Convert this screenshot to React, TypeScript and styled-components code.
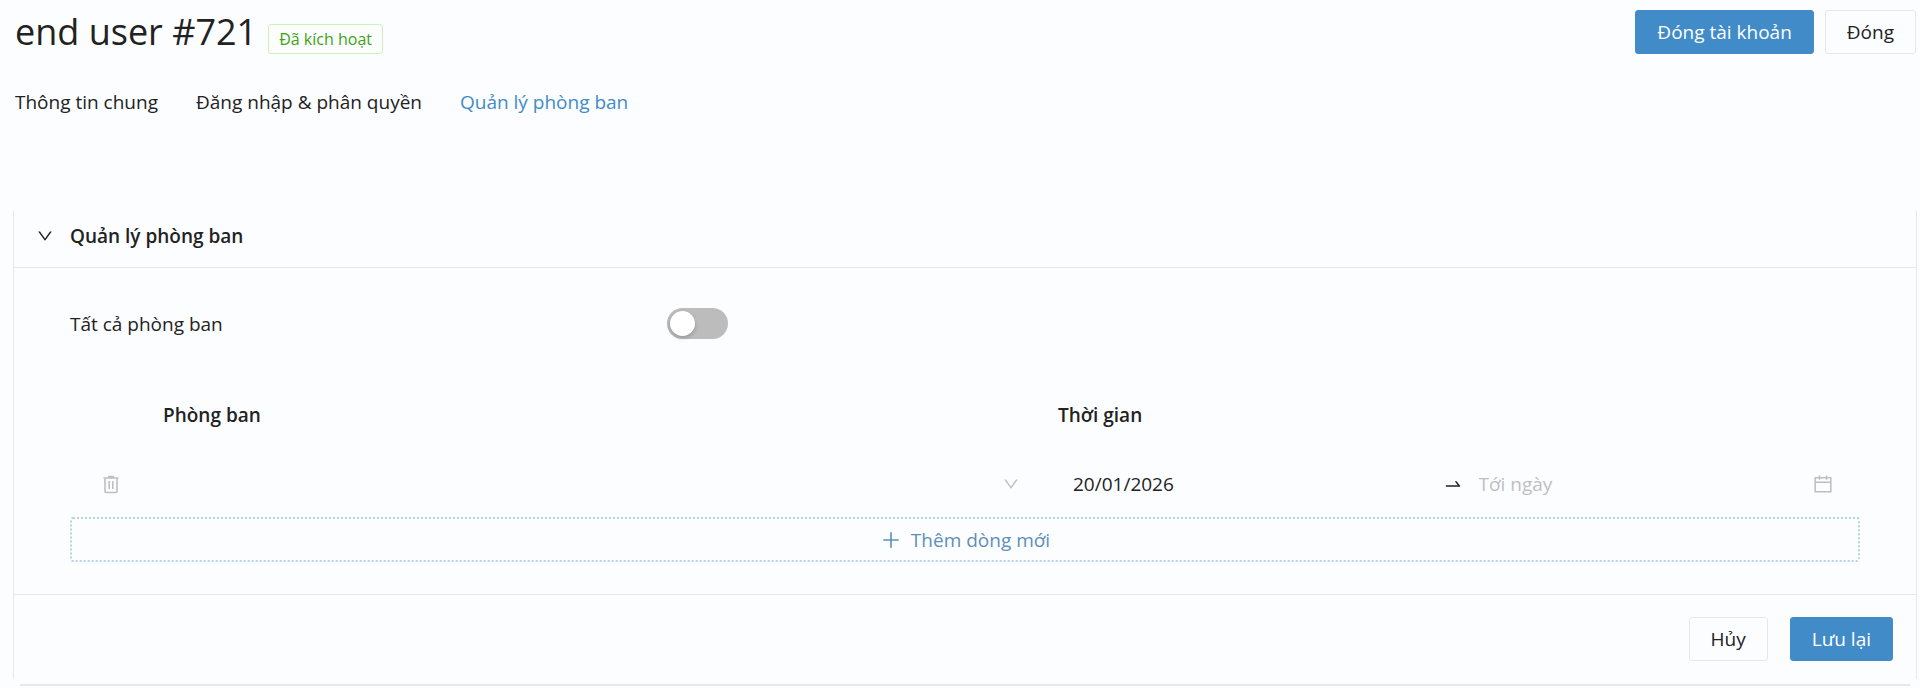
import React, { useState } from 'react';
import styled, { createGlobalStyle } from 'styled-components';
import {
  AiOutlineCalendar,
  AiOutlineDown,
  AiOutlinePlus,
  AiOutlineSwapRight,
} from 'react-icons/ai';

const color = {
  page: '#fcfdff',
  text: '#222222',
  muted: '#bfbfc1',
  line: '#e7e8ea',
  primary: '#418bc9',
  add: '#5d8fba',
  dash: '#b4d3e9',
  success: '#3ca312',
  successLine: '#cdf2b2',
};

const GlobalStyle = createGlobalStyle`
  *, *::before, *::after { box-sizing: border-box; }
  body {
    margin: 0;
    background: ${color.page};
    color: ${color.text};
    font-family: 'Open Sans', 'Noto Sans', sans-serif;
    font-size: 19px;
    line-height: 28px;
  }
  button, input, select { font: inherit; color: inherit; }
`;

const Page = styled.main`
  padding: 10px 3px 0 13px;
`;

const PageHeader = styled.header`
  display: flex;
  justify-content: space-between;
  align-items: flex-start;
  padding-right: 1px;
`;

const TitleGroup = styled.div`
  display: flex;
  align-items: flex-end;
  gap: 11px;
  padding-left: 2px;
`;

const Title = styled.h1`
  margin: 0;
  font-size: 36px;
  line-height: 44px;
  font-weight: 400;
`;

const Tag = styled.span`
  padding: 0 10px;
  border: 1px solid ${color.successLine};
  border-radius: 3px;
  color: ${color.success};
  font-size: 16px;
  line-height: 28px;
`;

const ButtonGroup = styled.div<{ $gap: number }>`
  display: flex;
  justify-content: flex-end;
  gap: ${(p) => p.$gap}px;
`;

const Button = styled.button<{ $primary?: boolean }>`
  height: 44px;
  padding: 0 21px;
  border: 1px solid ${(p) => (p.$primary ? color.primary : color.line)};
  border-radius: 3px;
  background: ${(p) => (p.$primary ? color.primary : color.page)};
  color: ${(p) => (p.$primary ? '#ffffff' : color.text)};
  cursor: pointer;
`;

const Tabs = styled.nav`
  display: flex;
  gap: 38px;
  padding: 34px 2px 95px;
`;

const Tab = styled.a<{ $active?: boolean }>`
  color: ${(p) => (p.$active ? color.primary : color.text)};
  text-decoration: none;
`;

const Panel = styled.section`
  border: solid ${color.line};
  border-width: 0 1px;
`;

const PanelHeader = styled.h2`
  margin: 0;
  border-bottom: 1px solid ${color.line};
  font-size: 19px;
  line-height: 28px;
  font-weight: 600;
`;

const PanelToggle = styled.button`
  display: flex;
  align-items: center;
  gap: 16px;
  width: 100%;
  padding: 11px 22px 17px;
  border: 0;
  background: none;
  text-align: left;
  cursor: pointer;

  svg { width: 18px; height: 18px; }
`;

const PanelBody = styled.div`
  padding: 40px 56px 32px;
`;

const SwitchRow = styled.div`
  display: grid;
  grid-template-columns: 1fr 2fr;
  align-items: center;
`;

const Switch = styled.input`
  appearance: none;
  width: 61px;
  height: 31px;
  margin: 0;
  padding: 3px;
  border-radius: 16px;
  background: #bcbcbc;
  cursor: pointer;

  &::before {
    content: '';
    display: block;
    width: 25px;
    height: 25px;
    border-radius: 50%;
    background: #ffffff;
    box-shadow: 0 2px 4px rgba(0, 0, 0, 0.2);
  }
  &:checked { background: ${color.primary}; }
  &:checked::before { margin-left: 30px; }
`;

const Table = styled.table`
  width: 100%;
  margin-top: 43px;
  border-collapse: collapse;
  table-layout: fixed;

  th, td { padding: 0 13px; text-align: left; }
  th { height: 66px; font-weight: 600; }
  td { height: 69px; padding-top: 3px; }
  thead td { height: 66px; }
`;

const IconColumn = styled.col`
  width: 80px;
`;

const DepartmentColumn = styled.col`
  width: 50%;
`;

const IconButton = styled.button`
  display: flex;
  margin: 0 auto;
  padding: 0;
  border: 0;
  background: none;
  color: ${color.muted};
  cursor: pointer;
`;

const SelectBox = styled.div`
  position: relative;
  color: ${color.muted};

  svg {
    position: absolute;
    top: 9px;
    right: 12px;
    width: 18px;
    height: 18px;
    pointer-events: none;
  }
`;

const Select = styled.select`
  appearance: none;
  display: block;
  width: 100%;
  height: 36px;
  padding: 0 40px 0 16px;
  border: 0;
  background: transparent;
  color: ${color.text};
`;

const DateRange = styled.div`
  position: relative;
  display: flex;
  align-items: center;
  gap: 16px;
  padding: 0 15px;
`;

const DateInput = styled.input`
  flex: 1;
  min-width: 0;
  height: 36px;
  padding: 0;
  border: 0;
  background: transparent;

  &::placeholder { color: ${color.muted}; opacity: 1; }
`;

const ArrowIcon = styled(AiOutlineSwapRight)`
  width: 20px;
  height: 20px;
`;

const CalendarIcon = styled(AiOutlineCalendar)`
  position: absolute;
  right: 13px;
  width: 22px;
  height: 22px;
  color: ${color.muted};
`;

const AddButton = styled.button`
  display: flex;
  justify-content: center;
  align-items: center;
  gap: 9px;
  width: 100%;
  height: 45px;
  border: 2px dotted ${color.dash};
  border-radius: 3px;
  background: none;
  color: ${color.add};
  cursor: pointer;

  svg { width: 22px; height: 22px; }
`;

const PanelFooter = styled.footer`
  padding: 22px 23px 18px;
  border-top: 1px solid ${color.line};
`;

const NextPanelEdge = styled.hr`
  height: 2px;
  margin: 5px 7px 0;
  border: 0;
  background: ${color.line};
`;

const TrashIcon = () => (
  <svg width="18" height="20" viewBox="0 0 18 20" fill="none" stroke="currentColor" aria-hidden="true">
    <path d="M2.5 4h15M7 2.5h6" strokeWidth="1.6" />
    <path d="M4 4v13.5q0 1 1 1h10q1 0 1-1V4" strokeWidth="1.6" />
    <path d="M8.2 7v8M11.800 7v8" strokeWidth="1.6" />
  </svg>
);

const tabs = ['Thông tin chung', 'Đăng nhập & phân quyền', 'Quản lý phòng ban'];

export default function App() {
  const [open, setOpen] = useState(true);
  const [activeTab, setActiveTab] = useState(2);

  return (
    <>
      <GlobalStyle />
      <Page>
        <PageHeader>
          <TitleGroup>
            <Title>end user #721</Title>
            <Tag>Đã kích hoạt</Tag>
          </TitleGroup>
          <ButtonGroup $gap={11}>
            <Button type="button" $primary>Đóng tài khoản</Button>
            <Button type="button">Đóng</Button>
          </ButtonGroup>
        </PageHeader>

        <Tabs>
          {tabs.map((label, i) => (
            <Tab key={label} href="#" $active={i === activeTab} onClick={() => setActiveTab(i)}>
              {label}
            </Tab>
          ))}
        </Tabs>

        <Panel>
          <PanelHeader>
            <PanelToggle type="button" aria-expanded={open} onClick={() => setOpen(!open)}>
              <AiOutlineDown />
              Quản lý phòng ban
            </PanelToggle>
          </PanelHeader>
          {open && (
            <PanelBody>
              <SwitchRow>
                <label htmlFor="all-departments">Tất cả phòng ban</label>
                <Switch id="all-departments" type="checkbox" role="switch" />
              </SwitchRow>
              <Table>
                <colgroup>
                  <IconColumn />
                  <DepartmentColumn />
                  <col />
                </colgroup>
                <thead>
                  <tr>
                    <td />
                    <th scope="col">Phòng ban</th>
                    <th scope="col">Thời gian</th>
                  </tr>
                </thead>
                <tbody>
                  <tr>
                    <td>
                      <IconButton type="button" aria-label="Xóa">
                        <TrashIcon />
                      </IconButton>
                    </td>
                    <td>
                      <SelectBox>
                        <Select aria-label="Phòng ban" />
                        <AiOutlineDown />
                      </SelectBox>
                    </td>
                    <td>
                      <DateRange>
                        <DateInput aria-label="Từ ngày" defaultValue="20/01/2026" />
                        <ArrowIcon />
                        <DateInput aria-label="Tới ngày" placeholder="Tới ngày" />
                        <CalendarIcon />
                      </DateRange>
                    </td>
                  </tr>
                </tbody>
              </Table>
              <AddButton type="button">
                <AiOutlinePlus />
                Thêm dòng mới
              </AddButton>
            </PanelBody>
          )}
          <PanelFooter>
            <ButtonGroup $gap={22}>
              <Button type="button">Hủy</Button>
              <Button type="button" $primary>Lưu lại</Button>
            </ButtonGroup>
          </PanelFooter>
        </Panel>
        <NextPanelEdge />
      </Page>
    </>
  );
}
